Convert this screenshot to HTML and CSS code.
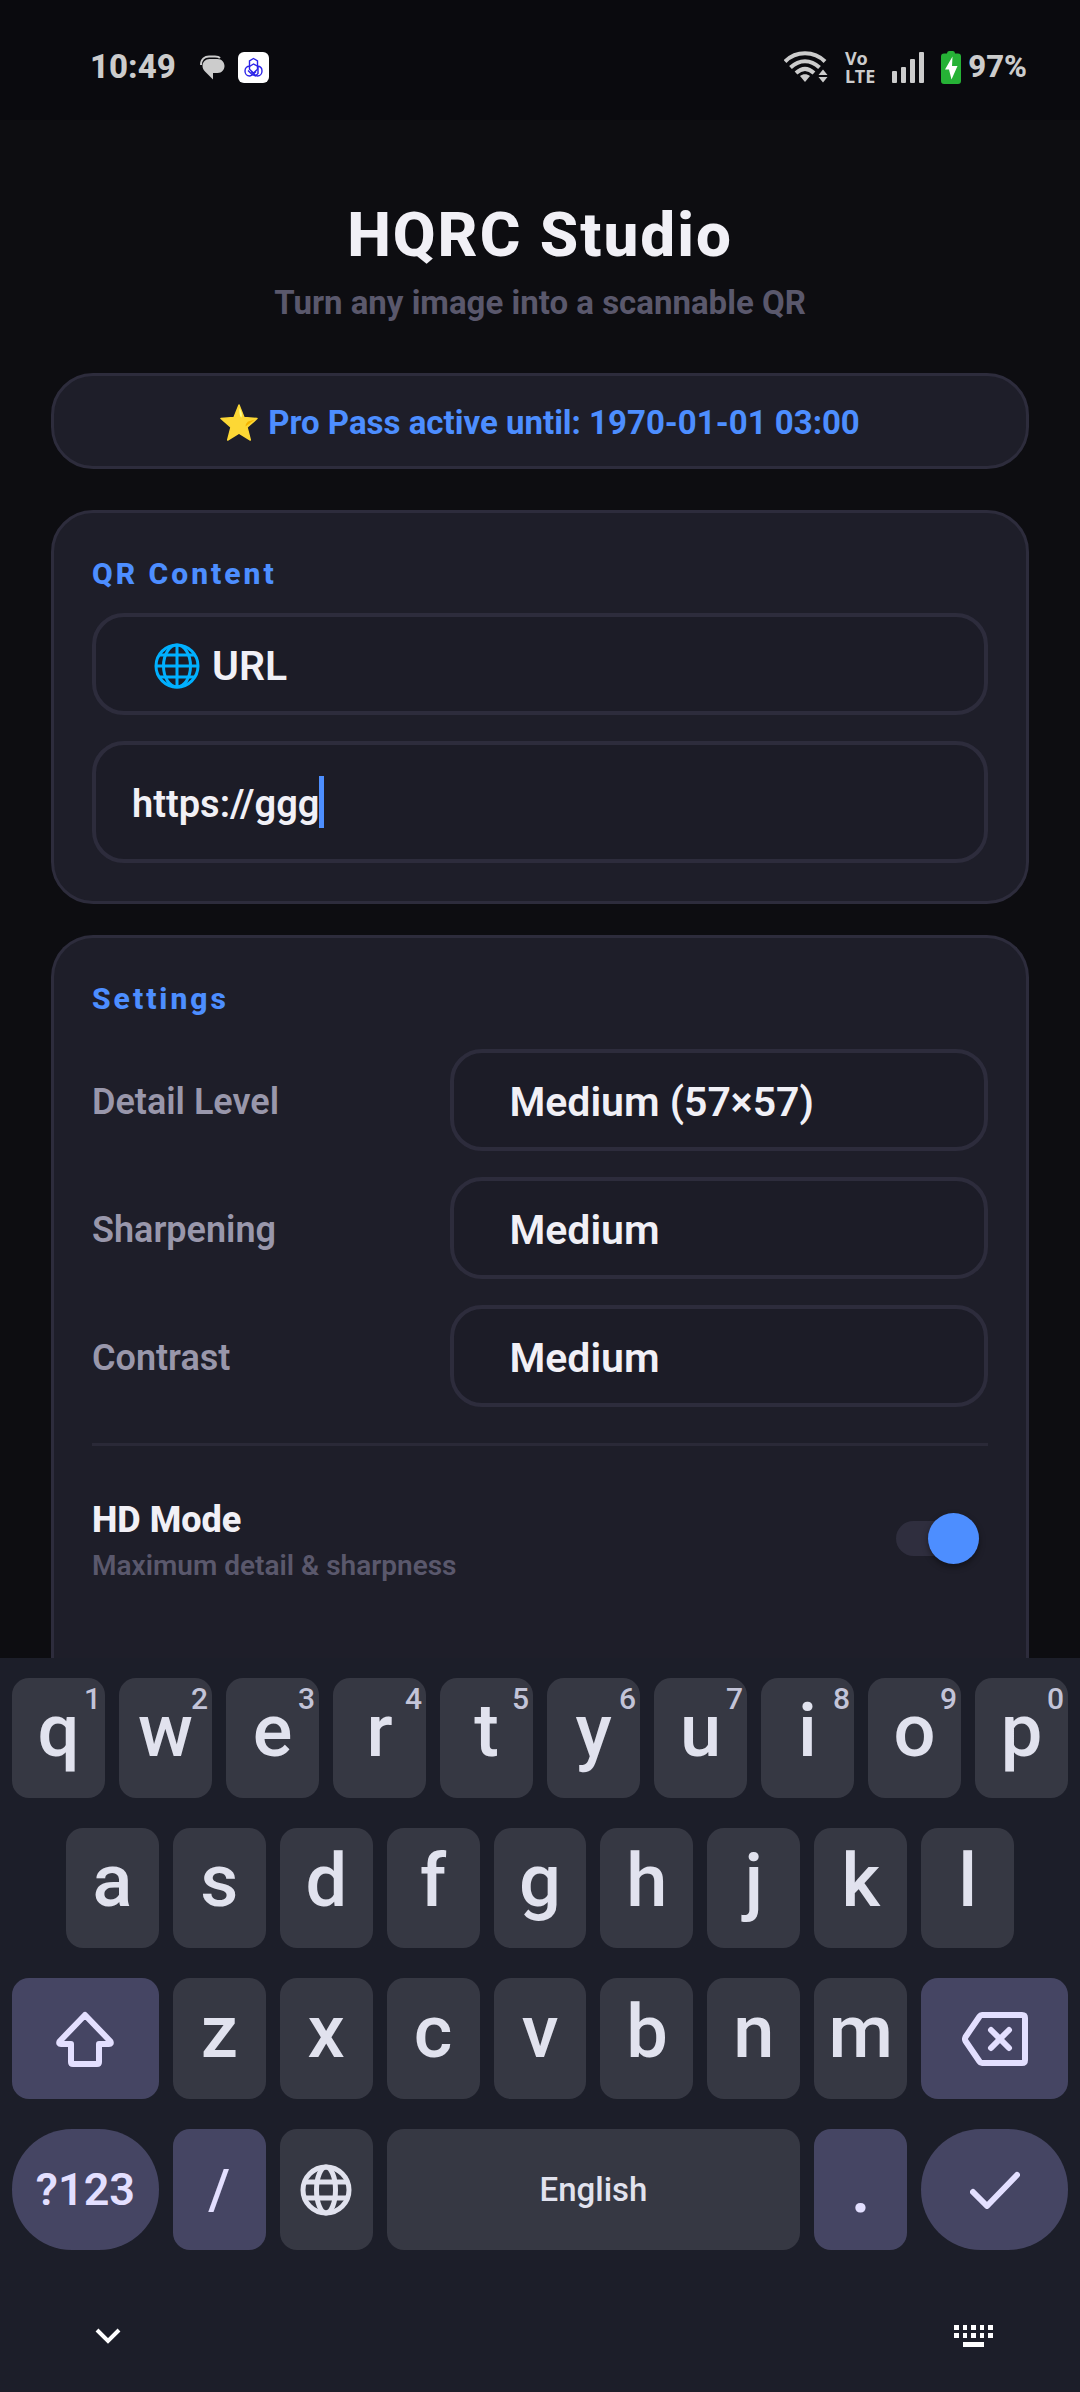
FILE: index.html
```html
<!DOCTYPE html>
<html lang="en">
<head>
    <meta charset="UTF-8">
    <meta name="viewport" content="width=device-width, initial-scale=1.0">
    <title>HQRC Studio</title>
    <link rel="stylesheet" href="styles.css">
</head>
<body>
    <div class="status-bar">
        <div class="status-left">
            <span class="clock">10:49</span>
            <svg class="icon-chat" width="25" height="25" viewBox="0 0 25 25" aria-hidden="true">
                <path d="M1 10C1 4 5 1.500 9 1.500h6c2 0 4 .5 5 1.500" fill="none" stroke="#ccc" stroke-width="2"/>
                <path d="M9.500 4h8C22 4 24.500 7.500 24.500 11S22 18 17.500 18H13v6.500L5 16.500C3.500 15 2.500 13 2.500 11 2.500 7 5.500 4 9.500 4z" fill="#ccc"/>
            </svg>
            <svg width="31" height="31" viewBox="0 0 31 31" aria-hidden="true">
                <rect width="31" height="31" rx="6" fill="#fff"/>
                <g fill="none" stroke="#2b22e8" stroke-width="1.400">
                    <path d="M15.500 6.500l4 2.300v8.500l-4 3.700-4-3.700V8.800z"/>
                    <path d="M11.500 14.500l4-2.500 4.500 2.500v7l-2.500 2.500-3.500-1.500-4-4"/>
                    <path d="M11.500 14.200c-2.500 0-4.500 1.800-4.500 4.800s2 5 4.500 5c2 0 4-2 6.500-4.500"/>
                    <path d="M19.500 14.200c2.500 0 4.500 1.800 4.500 4.800s-2 5-4.500 5c-2 0-4-2-6.500-4.500"/>
                </g>
            </svg>
        </div>
        <div class="status-right">
            <svg width="44" height="32" viewBox="0 0 44 32" aria-hidden="true">
                <g fill="none" stroke="#ccc" stroke-width="4">
                    <path d="M1 10.500C12-.5 30-.5 41 10.500"/>
                    <path d="M6.500 16.500c9-8.500 20-8.500 29 0"/>
                    <path d="M12 22c6-5.500 12-5.500 18 0"/>
                </g>
                <path d="M16 25c3-2.500 7-2.500 10 0l-5 6z" fill="#ccc"/>
                <path d="M39 18.500l4.500 5.500h-9zM39 31.500l4.500-5.500h-9z" fill="#ccc"/>
            </svg>
            <span class="volte">Vo<br>LTE</span>
            <svg width="32" height="31" viewBox="0 0 32 31" fill="#ccc" aria-hidden="true">
                <rect x="0" y="19" width="5" height="12" rx="1"/>
                <rect x="9" y="15" width="5" height="16" rx="1"/>
                <rect x="18" y="7" width="5" height="24" rx="1"/>
                <rect x="27" y="0" width="5" height="31" rx="1"/>
            </svg>
            <div class="battery">
                <svg width="20" height="33" viewBox="0 0 20 33" aria-hidden="true">
                    <path d="M6 2.500Q6 0 8 0h4q2 0 2 2.500h3q3 0 3 3V30q0 3-3 3H3q-3 0-3-3V5.500q0-3 3-3z" fill="#26b236"/>
                    <path d="M11.500 5.500L4 18.500h5l-1 0 2.500 10L16.500 15H11z" fill="#fff"/>
                </svg>
                <span>97%</span>
            </div>
        </div>
    </div>

    <main class="app">
        <header class="header">
            <h1>HQRC Studio</h1>
            <p>Turn any image into a scannable QR</p>
        </header>

        <div class="card pro-pass">
            <svg width="38" height="37" viewBox="0 0 38 37" aria-hidden="true">
                <path d="M19 1l5 12.500 13 1-10 8.800 3.300 12.700L19 29 7.700 36 11 23.300 1 14.500l13-1z" fill="#fdd835" stroke="#fdd835" stroke-width="1.500" stroke-linejoin="round"/>
                <path d="M19.500 4c2 3 3 7 2 9.500-1.500 0-2.500-5-2-9.500z" fill="#ffff8d"/>
                <path d="M35 15.500l-9.500 7q0-3 2.500-5z" fill="#f4b400"/>
            </svg>
            <span>Pro Pass active until: 1970-01-01 03:00</span>
        </div>

        <section class="card content-card">
            <h2>QR Content</h2>
            <div class="select-wrap">
                <svg class="globe" width="46" height="46" viewBox="0 0 46 46" fill="none" stroke="#00b0ff" stroke-width="3" aria-hidden="true">
                    <circle cx="23" cy="23" r="21"/>
                    <ellipse cx="23" cy="23" rx="13.500" ry="21"/>
                    <path d="M23 2v42M2 23h42M5 12h36M5 34h36"/>
                </svg>
                <select class="box with-icon" aria-label="Content type">
                    <option>URL</option>
                </select>
            </div>
            <label class="box url-box">
                <input type="text" value="https://ggg" aria-label="URL">
                <span class="caret"></span>
            </label>
        </section>

        <section class="card settings-card">
            <h2>Settings</h2>
            <div class="setting">
                <label for="detail">Detail Level</label>
                <select class="box" id="detail">
                    <option>Medium (57×57)</option>
                </select>
            </div>
            <div class="setting">
                <label for="sharpening">Sharpening</label>
                <select class="box" id="sharpening">
                    <option>Medium</option>
                </select>
            </div>
            <div class="setting">
                <label for="contrast">Contrast</label>
                <select class="box" id="contrast">
                    <option>Medium</option>
                </select>
            </div>
            <hr>
            <div class="toggle-row">
                <label for="hd">
                    <span class="toggle-title">HD Mode</span>
                    <span class="toggle-hint">Maximum detail &amp; sharpness</span>
                </label>
                <input type="checkbox" class="switch" id="hd" checked>
            </div>
        </section>
    </main>

    <div class="keyboard">
        <div class="key-row">
            <button class="key">q<sup>1</sup></button>
            <button class="key">w<sup>2</sup></button>
            <button class="key">e<sup>3</sup></button>
            <button class="key">r<sup>4</sup></button>
            <button class="key">t<sup>5</sup></button>
            <button class="key">y<sup>6</sup></button>
            <button class="key">u<sup>7</sup></button>
            <button class="key">i<sup>8</sup></button>
            <button class="key">o<sup>9</sup></button>
            <button class="key">p<sup>0</sup></button>
        </div>
        <div class="key-row middle">
            <button class="key">a</button>
            <button class="key">s</button>
            <button class="key">d</button>
            <button class="key">f</button>
            <button class="key">g</button>
            <button class="key">h</button>
            <button class="key">j</button>
            <button class="key">k</button>
            <button class="key">l</button>
        </div>
        <div class="key-row lower">
            <button class="key wide accent" aria-label="Shift">
                <svg width="58" height="56" viewBox="0 0 58 56" fill="none" stroke="#e3dfff" stroke-width="6" stroke-linejoin="round" aria-hidden="true">
                    <path d="M29 4L3.500 30.500q-1 2.500 1.500 2.500h10v18q0 2 2 2h24q2 0 2-2V33h10q2.500 0 1.500-2.500z"/>
                </svg>
            </button>
            <button class="key">z</button>
            <button class="key">x</button>
            <button class="key">c</button>
            <button class="key">v</button>
            <button class="key">b</button>
            <button class="key">n</button>
            <button class="key">m</button>
            <button class="key wide accent" aria-label="Backspace">
                <svg width="66" height="54" viewBox="0 0 66 54" fill="none" stroke="#e3dfff" stroke-width="6" stroke-linecap="round" stroke-linejoin="round" aria-hidden="true">
                    <path d="M20 3h40q3 0 3 3v42q0 3-3 3H20q-1.500 0-2.500-1.500L3.500 29q-1-2 0-4L17.500 4.500Q18.500 3 20 3z"/>
                    <path d="M29 18l18 18M47 18L29 36"/>
                </svg>
            </button>
        </div>
        <div class="key-row lower">
            <button class="key wide accent round symbols">?123</button>
            <button class="key accent slash">/</button>
            <button class="key" aria-label="Change language">
                <svg width="52" height="52" viewBox="0 0 52 52" fill="none" stroke="#e1e2ee" stroke-width="5" aria-hidden="true">
                    <circle cx="26" cy="26" r="23"/>
                    <ellipse cx="26" cy="26" rx="9.500" ry="23"/>
                    <path d="M5 18h42M5 34h42"/>
                </svg>
            </button>
            <button class="key space">English</button>
            <button class="key accent period">.</button>
            <button class="key wide accent round" aria-label="Done">
                <svg width="50" height="38" viewBox="0 0 50 38" fill="none" stroke="#e3dfff" stroke-width="6" stroke-linecap="round" stroke-linejoin="round" aria-hidden="true">
                    <path d="M3 21l14 14L47 4"/>
                </svg>
            </button>
        </div>
        <div class="nav-bar">
            <button class="nav-button" aria-label="Hide keyboard">
                <svg width="26" height="17" viewBox="0 0 26 17" fill="none" stroke="#fff" stroke-width="4" aria-hidden="true">
                    <path d="M2 2l11 11L24 2"/>
                </svg>
            </button>
            <button class="nav-button" aria-label="Switch keyboard">
                <svg width="39" height="22" viewBox="0 0 39 22" fill="#fff" aria-hidden="true">
                    <path d="M0 0h5v5H0zM9 0h4v5H9zM17 0h5v5h-5zM26 0h4v5h-4zM34 0h5v5h-5zM0 8h5v5H0zM9 8h4v5H9zM17 8h5v5h-5zM26 8h4v5h-4zM34 8h5v5h-5zM9 17h21v5H9z"/>
                </svg>
            </button>
        </div>
    </div>
</body>
</html>
```
FILE: styles.css
```css
* {
    box-sizing: border-box;
}

body {
    font-family: Roboto, sans-serif;
    background-color: #0d0d11;
    color: #f1f0f6;
    margin: 0;
    min-height: 100vh;
    display: flex;
    flex-direction: column;
}

h1, h2, p {
    margin: 0;
}

svg {
    display: block;
    flex-shrink: 0;
}

button, input, select {
    font-family: inherit;
}

/* Status bar */
.status-bar {
    display: flex;
    justify-content: space-between;
    align-items: center;
    height: 120px;
    padding: 14px 53px 0 90px;
    background-color: #0a0a0e;
    color: #ccc;
    font-size: 33px;
    font-weight: 800;
    line-height: 32px;
}

.status-left,
.status-right {
    display: flex;
    align-items: center;
}

.icon-chat {
    margin: 0 13px 0 24px;
}

.status-right {
    gap: 17px;
    font-size: 31px;
}

.volte {
    font-family: "Noto Sans", sans-serif;
    font-size: 18px;
    line-height: 18px;
    font-weight: 700;
}

.battery {
    display: flex;
    align-items: center;
    gap: 7px;
}

/* App */
.app {
    flex: 1;
    padding: 79px 51px 0;
}

.header {
    text-align: center;
    margin-bottom: 50px;
}

.header h1 {
    font-size: 62px;
    line-height: 72px;
    letter-spacing: 2px;
    font-weight: 800;
}

.header p {
    font-size: 33px;
    line-height: 40px;
    margin-top: 12px;
    font-weight: 700;
    color: #5a586c;
}

.card {
    background-color: #1e1e29;
    border: 3px solid #2d2c3c;
    border-radius: 42px;
    padding: 38px;
}

.pro-pass {
    display: flex;
    justify-content: center;
    align-items: center;
    gap: 10px;
    height: 96px;
    padding: 2px 0 0;
    margin-bottom: 41px;
    color: #4d8eff;
    font-size: 33px;
    font-weight: 700;
}

.card h2 {
    padding-top: 2px;
    font-size: 30px;
    line-height: 42px;
    letter-spacing: 3px;
    font-weight: 800;
    color: #4d8eff;
}

.content-card {
    margin-bottom: 31px;
}

.box {
    display: block;
    width: 100%;
    height: 102px;
    padding: 3px 55px 0;
    border: 4px solid #2d2c3c;
    border-radius: 32px;
    background-color: #1c1c27;
    color: #f1f0f6;
    font-size: 41px;
    font-weight: 650;
    appearance: none;
}

.select-wrap {
    position: relative;
    margin: 18px 0 26px;
}

.globe {
    position: absolute;
    left: 62px;
    top: 30px;
}

.with-icon {
    padding-left: 116px;
}

.url-box {
    display: flex;
    align-items: center;
    height: 122px;
    padding: 0 36px;
}

.url-box input {
    field-sizing: content;
    padding: 3px 0 0;
    border: none;
    outline: none;
    background: none;
    color: inherit;
    font-size: 38px;
    font-weight: 650;
}

.caret {
    width: 5px;
    height: 52px;
    background-color: #4d8eff;
}

.settings-card {
    border-bottom: none;
    border-radius: 42px 42px 0 0;
    padding-bottom: 72px;
}

.settings-card h2 {
    margin-bottom: 29px;
}

.setting {
    display: grid;
    grid-template-columns: 2fr 3fr;
    align-items: center;
    margin-bottom: 26px;
}

.setting label {
    padding-top: 3px;
    font-size: 36px;
    font-weight: 650;
    color: #9997ab;
}

hr {
    height: 3px;
    margin: 36px 0 0;
    border: none;
    background-color: #2a2937;
}

.toggle-row {
    display: flex;
    justify-content: space-between;
    align-items: center;
    padding: 45px 9px 0 0;
}

.toggle-row label {
    padding-top: 3px;
}

.toggle-title {
    display: block;
    font-size: 36px;
    line-height: 52px;
    font-weight: 800;
}

.toggle-hint {
    display: block;
    font-size: 28px;
    line-height: 40px;
    font-weight: 650;
    color: #5a586c;
}

.switch {
    appearance: none;
    display: flex;
    justify-content: flex-end;
    align-items: center;
    width: 83px;
    height: 35px;
    margin: 0;
    border-radius: 18px;
    background-color: #2f2e3e;
}

.switch::before {
    content: "";
    width: 51px;
    height: 51px;
    flex-shrink: 0;
    border-radius: 50%;
    background-color: #4d8eff;
    box-shadow: 0 3px 6px rgba(0, 0, 0, 0.4);
}

/* Keyboard */
.keyboard {
    display: flex;
    flex-direction: column;
    gap: 30px;
    padding: 20px 12px 0;
    background-color: #1c1e29;
}

.key-row {
    display: flex;
    gap: 14px;
    height: 120px;
}

.key-row.middle {
    padding: 0 54px;
}

.key-row.lower {
    height: 121px;
}

.key {
    position: relative;
    flex: 93 1 0;
    display: flex;
    justify-content: center;
    align-items: center;
    min-width: 0;
    padding: 0 0 14px;
    border: none;
    border-radius: 17px;
    background-color: #363843;
    color: #e1e2ee;
    font-size: 74px;
    line-height: 84px;
    font-weight: 500;
}

.key:has(svg) {
    padding: 0;
}

.key sup {
    position: absolute;
    top: 4px;
    right: 4px;
    font-size: 30px;
    line-height: 34px;
    font-weight: 500;
    color: #c3c4d8;
}

.key.wide {
    flex-grow: 147;
}

.key.space {
    flex-grow: 414;
    padding: 0;
    font-size: 33px;
}

.key.accent {
    background-color: #454563;
    color: #e3dfff;
}

.key.round {
    border-radius: 60px;
}

.key.symbols {
    padding: 0;
    font-size: 45px;
    font-weight: 650;
}

.key.slash {
    padding: 0;
    font-size: 56px;
}

.key.period {
    padding: 0 0 6px;
}

.nav-bar {
    display: flex;
    justify-content: space-between;
    align-items: center;
    height: 112px;
    padding: 0 75px 0 83px;
}

.nav-button {
    padding: 0;
    border: none;
    background: none;
}
```
